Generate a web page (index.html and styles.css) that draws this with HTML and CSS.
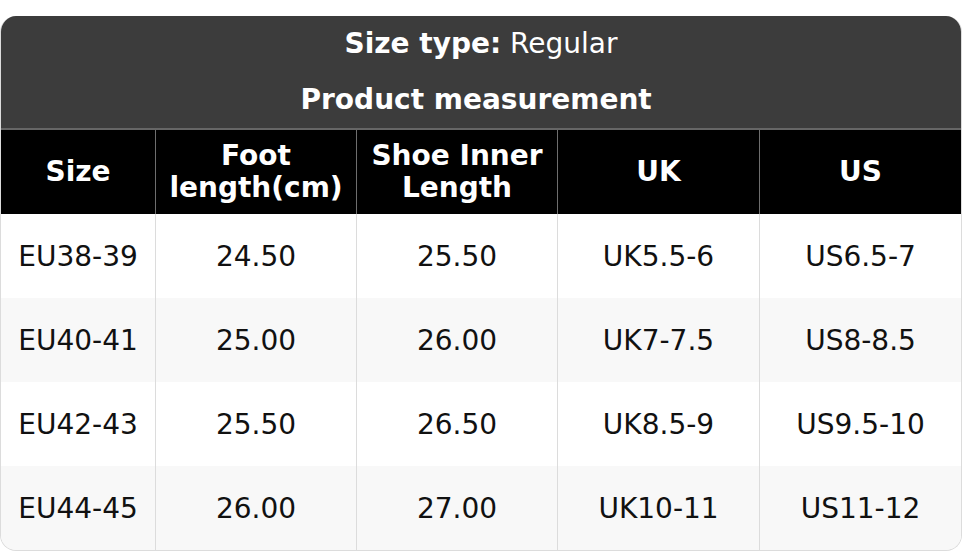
FILE: index.html
```html
<!DOCTYPE html>
<html>
<head>
<meta charset="utf-8">
<link rel="stylesheet" href="styles.css">
</head>
<body>
<div class="card">
  <div class="title">
    <div class="title-line"><b>Size type:</b> Regular</div>
    <div class="title-line"><b>Product measurement&nbsp;</b></div>
  </div>
  <div class="grid">
    <div class="th">Size</div>
    <div class="th">Foot<br>length(cm)</div>
    <div class="th">Shoe Inner<br>Length</div>
    <div class="th">UK</div>
    <div class="th">US</div>

    <div class="td">EU38-39</div>
    <div class="td">24.50</div>
    <div class="td">25.50</div>
    <div class="td">UK5.5-6</div>
    <div class="td">US6.5-7</div>

    <div class="td alt">EU40-41</div>
    <div class="td alt">25.00</div>
    <div class="td alt">26.00</div>
    <div class="td alt">UK7-7.5</div>
    <div class="td alt">US8-8.5</div>

    <div class="td">EU42-43</div>
    <div class="td">25.50</div>
    <div class="td">26.50</div>
    <div class="td">UK8.5-9</div>
    <div class="td">US9.5-10</div>

    <div class="td alt">EU44-45</div>
    <div class="td alt">26.00</div>
    <div class="td alt">27.00</div>
    <div class="td alt">UK10-11</div>
    <div class="td alt">US11-12</div>
  </div>
</div>
</body>
</html>
```
FILE: styles.css
```css
html, body {
  margin: 0;
  padding: 0;
  background: #ffffff;
}
body {
  padding-top: 16px;
  font-family: "DejaVu Sans", sans-serif;
  font-size: 28px;
}
.card {
  width: 962px;
  box-sizing: border-box;
  border: 1px solid #dcdcdc;
  border-top: none;
  border-radius: 16px;
  overflow: hidden;
}
.title {
  background: #3c3c3c;
  color: #ffffff;
  text-align: center;
  height: 112px;
  border-bottom: 2px solid #666666;
}
.title-line {
  height: 56px;
  line-height: 56px;
}
.title b { font-weight: bold; }
.grid {
  display: grid;
  grid-template-columns: 154px 201px 201px 202px 202px;
  grid-auto-rows: 84px;
}
.th, .td {
  display: flex;
  align-items: center;
  justify-content: center;
  text-align: center;
}
.th {
  background: #000000;
  color: #ffffff;
  font-weight: bold;
  line-height: 32px;
}
.th + .th { border-left: 1px solid #6e6e6e; }
.td {
  background: #ffffff;
  color: #111111;
  border-left: 1px solid #dcdcdc;
}
.grid > :nth-child(5n+1) { border-left: none; }
.td.alt { background: #f8f8f8; }
```
